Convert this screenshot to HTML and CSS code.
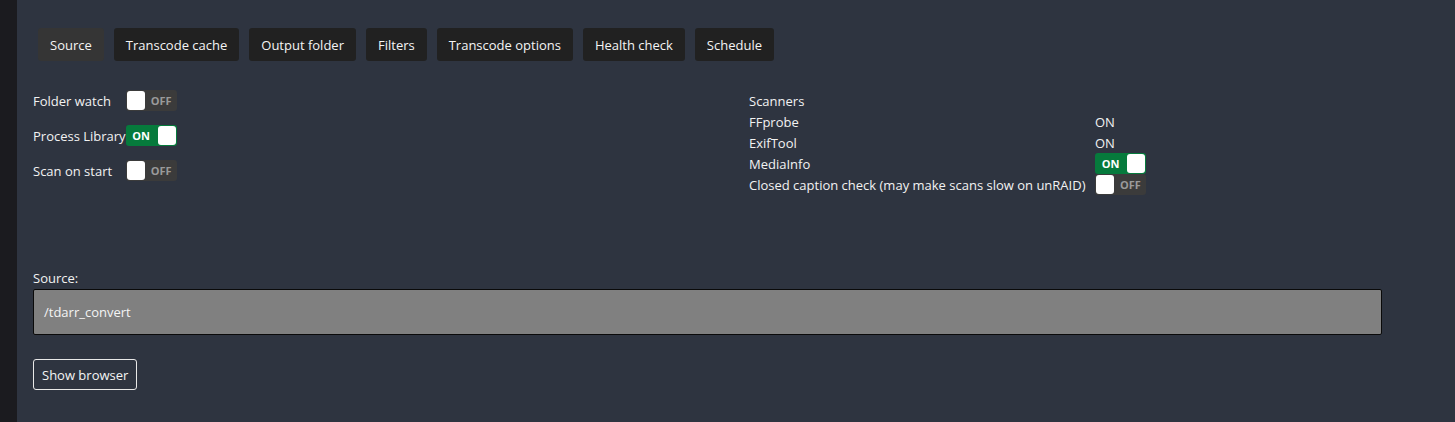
FILE: index.html
```html
<!DOCTYPE html>
<html>
<head>
<meta charset="utf-8">
<link rel="stylesheet" href="styles.css">
</head>
<body>
<div class="app">
  <aside class="rail"></aside>
  <main class="main">
    <nav class="tabs">
      <button class="tab active">Source</button>
      <button class="tab">Transcode cache</button>
      <button class="tab">Output folder</button>
      <button class="tab">Filters</button>
      <button class="tab">Transcode options</button>
      <button class="tab">Health check</button>
      <button class="tab">Schedule</button>
    </nav>
    <section class="options">
      <table class="opt-table left">
        <tr><td class="lbl">Folder watch</td><td><span class="toggle off"><span class="knob"></span><span class="txt">OFF</span></span></td></tr>
        <tr><td class="lbl">Process Library</td><td><span class="toggle on"><span class="txt">ON</span><span class="knob"></span></span></td></tr>
        <tr><td class="lbl">Scan on start</td><td><span class="toggle off"><span class="knob"></span><span class="txt">OFF</span></span></td></tr>
      </table>
      <table class="opt-table right">
        <tr><td class="lbl">Scanners</td><td></td></tr>
        <tr><td class="lbl">FFprobe</td><td>ON</td></tr>
        <tr><td class="lbl">ExifTool</td><td>ON</td></tr>
        <tr><td class="lbl">MediaInfo</td><td><span class="toggle on"><span class="txt">ON</span><span class="knob"></span></span></td></tr>
        <tr><td class="lbl">Closed caption check (may make scans slow on unRAID)</td><td><span class="toggle off"><span class="knob"></span><span class="txt">OFF</span></span></td></tr>
      </table>
    </section>
    <section class="source">
      <label class="src-label">Source:</label>
      <div class="src-input">/tdarr_convert</div>
      <button class="outline-btn">Show browser</button>
    </section>
  </main>
</div>
</body>
</html>
```
FILE: styles.css
```css
* { box-sizing: border-box; }
html, body { margin: 0; padding: 0; height: 100%; }
body {
  background: #2e3440;
  color: #f2f2f2;
  font-family: "Open Sans", "Noto Sans", sans-serif;
  font-size: 13px;
}
.app { display: flex; min-height: 422px; }
.rail { width: 17px; background: #1b1b1f; flex: none; }
.main { flex: 1; padding: 28px 0 0 16px; }
.tabs { display: flex; gap: 10px; margin-left: 5px; }
.tab {
  font: inherit;
  font-size: 13px;
  color: #f4f4f4;
  background: #212121;
  border: none;
  border-radius: 3px;
  height: 33px;
  padding: 0 12px;
  cursor: pointer;
}
.tab.active { background: #353535; }
.options {
  display: grid;
  grid-template-columns: 716px 1fr;
  margin-top: 28px;
  height: 180px;
}
.opt-table { border-collapse: collapse; align-self: start; justify-self: start; }
.opt-table td { padding: 0; vertical-align: middle; white-space: nowrap; }
.left tr { height: 35px; }
.left { margin-top: -6px; }
.right tr { height: 21px; }
.right { margin-top: 1px; }
.right .lbl { width: 346px; }
.toggle {
  display: inline-flex;
  width: 51px;
  height: 21px;
  border-radius: 3px;
  align-items: center;
  vertical-align: middle;
  overflow: hidden;
  font-size: 11px;
  font-weight: 700;
}
.toggle.off { background: #3b3b3b; color: #9a9a9a; }
.toggle.on { background: #067a3c; color: #ffffff; }
.toggle .knob {
  width: 18px;
  height: 19px;
  background: #ffffff;
  border-radius: 3px;
  margin: 0 1px;
  flex: none;
}
.toggle .txt { flex: 1; text-align: center; }
.source { display: flex; flex-direction: column; align-items: flex-start; }
.src-label { line-height: 18px; }
.src-input {
  width: 1349px;
  height: 46px;
  background: #808080;
  border: 1px solid #0a0a0a;
  border-radius: 2px;
  padding: 0 10px;
  display: flex;
  align-items: center;
  margin-top: 2px;
  color: #f4f4f4;
}
.outline-btn {
  font: inherit;
  color: #f4f4f4;
  background: transparent;
  border: 1px solid #e8e8e8;
  border-radius: 3px;
  height: 31px;
  padding: 0 8px;
  margin-top: 24px;
}
```
